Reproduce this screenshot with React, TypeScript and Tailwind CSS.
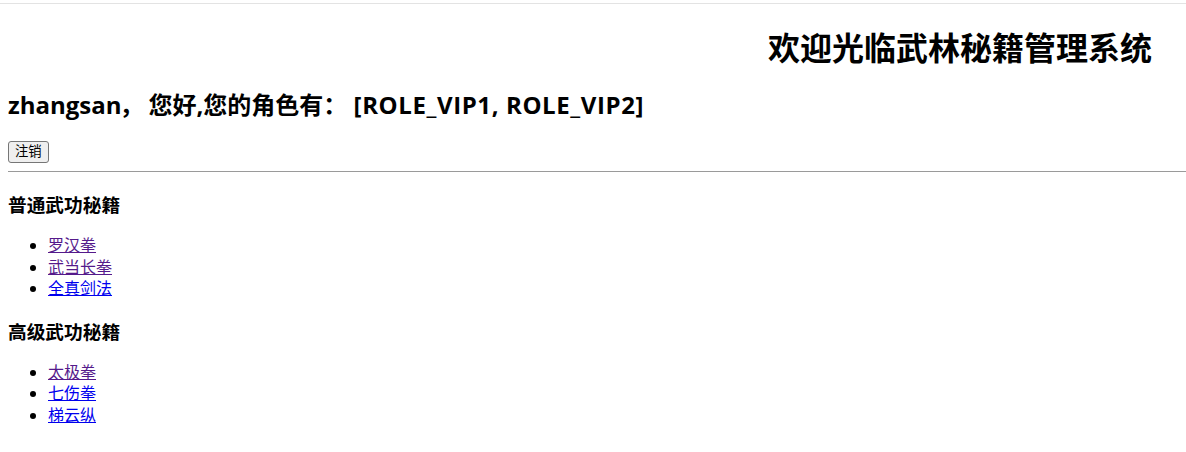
import React from 'react';

interface Book {
    name: string;
    visited: boolean;
}

const basicBooks: Book[] = [
    { name: '罗汉拳', visited: true },
    { name: '武当长拳', visited: true },
    { name: '全真剑法', visited: false },
];

const advancedBooks: Book[] = [
    { name: '太极拳', visited: true },
    { name: '七伤拳', visited: false },
    { name: '梯云纵', visited: false },
];

const font = { fontFamily: '"Open Sans", "Noto Sans CJK SC", sans-serif' };

const BookList: React.FC<{ title: string; books: Book[]; top: string }> = ({ title, books, top }) => (
    <div>
        <h3 className={`text-[18.7px] font-bold leading-[24px] ${top}`}>{title}</h3>
        <ul className="list-disc pl-[40px] mt-[18px] text-[16px] leading-[21.5px]">
            {books.map((book) => (
                <li key={book.name}>
                    <a
                        href="#"
                        className={book.visited ? 'underline text-[#551a8b]' : 'underline text-[#0000ee]'}
                    >
                        {book.name}
                    </a>
                </li>
            ))}
        </ul>
    </div>
);

const App: React.FC = () => {
    return (
        <div className="bg-white text-black min-h-[452px]" style={font}>
            <div className="pt-[3px]">
                <div className="h-px bg-[#e3e3e3]" />
            </div>
            <div className="pl-[8px]">
                <h1 className="text-[32px] font-bold leading-[40px] text-right pr-[34px] mt-[24px]">
                    欢迎光临武林秘籍管理系统
                </h1>
                <h2 className="text-[24px] font-bold leading-[32px] mt-[21px]">
                    zhangsan<span className="inline-block w-[29px] -ml-[2px]">，</span>您好,您的角色有：{' '}
                    <span className="tracking-[0.6px]">[ROLE_VIP1, ROLE_VIP2]</span>
                </h2>
                <button className="mt-[20px] h-[22px] px-[6px] text-[13.33px] leading-none bg-[#efefef] border border-[#767676] rounded-[3px]">
                    注销
                </button>
                <hr className="mt-[8px] border-t border-[#9a9a9a]" />
                <BookList title="普通武功秘籍" books={basicBooks} top="mt-[21px]" />
                <BookList title="高级武功秘籍" books={advancedBooks} top="mt-[20px]" />
            </div>
        </div>
    );
};

export default App;
